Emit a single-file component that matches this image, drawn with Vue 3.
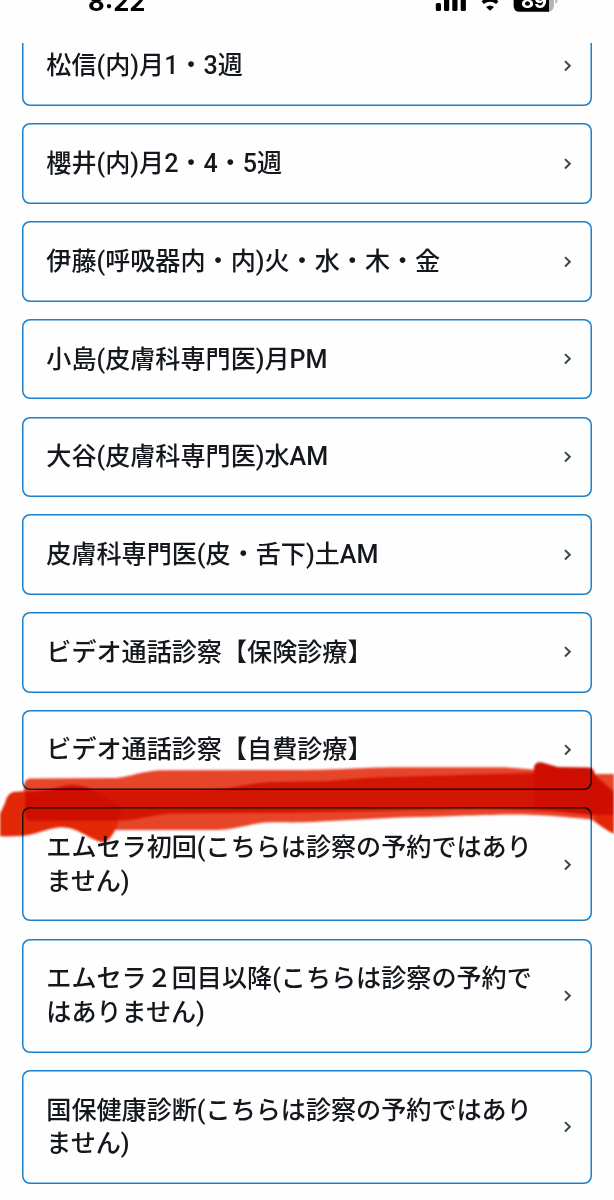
<template>
  <div class="screen">
    <!-- Status bar -->
    <header class="status-bar">
      <span class="clock">8:22</span>
      <svg class="status-icons" width="130" height="24" viewBox="430 -11 130 24">
        <rect x="435.8" y="3" width="5.2" height="8" rx="1.6" />
        <rect x="444" y="-1" width="5.2" height="12" rx="1.6" />
        <rect x="452.3" y="-4" width="5.2" height="15" rx="1.6" />
        <rect x="460.7" y="-8" width="5.2" height="19" rx="1.6" />
        <path d="M490 10.8 L486 6.9 Q490 3.9 494 6.9 Z" />
        <path class="arc" d="M482.7 2.6 Q490 -2.9 497.3 2.6" />
        <path class="arc" d="M478 -2.3 Q490 -11 502 -2.3" />
        <path d="M519 -8 H549.3 V11.8 H519.5 Q513.6 11.8 513.6 5.5 V-3 Q513.6 -8 519 -8 Z" />
        <path class="battery-rest" d="M549.3 -8 Q554 -7 554 -2 V5 Q554 10.5 549.3 11.7 Z" />
        <path class="battery-rest" d="M555.4 -2 Q557.4 -1 557.4 1 Q557.2 3.2 555.4 4 Z" />
        <text x="534" y="8.3" text-anchor="middle">89</text>
      </svg>
    </header>

    <!-- Menu list -->
    <main class="menu">
      <ul class="menu-list">
        <li v-for="item in items" :key="item" class="menu-item">
          <span class="label">{{ item }}</span>
          <svg class="chevron" width="8" height="12" viewBox="0 0 8 12">
            <path d="M1 1.1 L5.8 5.8 L1 10.5" />
          </svg>
        </li>
      </ul>
    </main>

    <!-- Red marker -->
    <svg class="marker" width="614" height="100" viewBox="0 755 614 100">
      <path
        class="light"
        d="M24 785 Q25 778 31 778.5 L115 778 C132 777 140 770.5 165 770.3 L300 770 C340 770 355 767.5 400 767.3 L505 767.3 L533 769.5 L596 774 L620 774 L620 836 C606 831 599 824 591 819.5 C565 817 545 814.5 510 814.5 C475 815 450 816.5 400 817.5 L320 821.5 C300 823 285 822 265 822.5 C245 825 235 830 215 830 L110 830 L24 825 Z"
      />
      <path
        class="mid"
        d="M26 791 L13 792 Q7 794 5 803 L-3 820 L-3 836 L5 836.5 L22 836 C36 835 47 828 62 827 C78 828 86 837 98 841 Q105 844 108 840 Q114 835 118 823 L123 808 L90 790 Z"
      />
      <path
        class="dark"
        d="M25 792 L50 789.5 C62 786 70 784 76 785 Q85 786 94 789.5 L205 789.5 C240 789 250 782 276 782 L330 781 C370 777 390 777 410 776.5 L490 774 L533 773 L596 776 L616 793 L616 815 L592 815 C570 812 540 810 500 809.5 C460 809 430 810 400 810.5 L300 812.5 L170 813.5 C150 815 140 820 120 820.5 L30 821 Q25 820 25 814 Z"
      />
      <path
        class="deep"
        d="M26 793 L60 789 Q78 784 92 790 L122 808 L117 820 L30 820 Q25 819 25 812 Z"
      />
      <path
        class="deep"
        d="M534 767 Q535 762 541 762.3 L558 767 L590 767.5 Q595 769 595.5 778 L614 795 L614 815 L592 815 L534 809 Z"
      />
      <path class="mid" d="M595 815 L620 815 L620 836 Q603 830 595 820 Z" />
    </svg>
  </div>
</template>

<script setup>
  const items = [
    '松信(内)月1・3週',
    '櫻井(内)月2・4・5週',
    '伊藤(呼吸器内・内)火・水・木・金',
    '小島(皮膚科専門医)月PM',
    '大谷(皮膚科専門医)水AM',
    '皮膚科専門医(皮・舌下)土AM',
    'ビデオ通話診察【保険診療】',
    'ビデオ通話診察【自費診療】',
    'エムセラ初回(こちらは診察の予約ではありません)',
    'エムセラ２回目以降(こちらは診察の予約ではありません)',
    '国保健康診断(こちらは診察の予約ではありません)'
  ]
</script>

<style>
  body {
    background: #fefefe;
  }
</style>

<style scoped>
  .screen {
    position: relative;
    width: 614px;
    height: 1200px;
    overflow: hidden;
    background: #fefefe;
    font-family: Roboto, "Noto Sans CJK JP", sans-serif;
    color: #14181c;
  }

  /* Status bar */
  .status-bar {
    display: flex;
    justify-content: space-between;
    align-items: flex-start;
    height: 43px;
    padding: 0 54px 0 88px;
    box-sizing: border-box;
    overflow: hidden;
    color: #000;
  }

  .clock {
    margin-top: -12px;
    font-family: Inter, sans-serif;
    font-size: 25.6px;
    font-weight: 700;
    line-height: 28px;
  }

  .status-icons {
    margin-top: -11px;
  }

    .status-icons .arc {
      fill: none;
      stroke: #000;
      stroke-width: 3.6;
    }

    .status-icons .battery-rest {
      fill: #b5b5b5;
    }

    .status-icons text {
      fill: #fff;
      font-family: Inter, sans-serif;
      font-size: 20px;
      font-weight: 700;
    }

  /* Menu list */
  .menu {
    height: 1157px;
    overflow: hidden;
  }

  .menu-list {
    display: flex;
    flex-direction: column;
    gap: 17.25px;
    margin: -17.4px 22.3px 0;
    padding: 0;
    list-style: none;
  }

  .menu-item {
    display: flex;
    align-items: center;
    justify-content: space-between;
    box-sizing: border-box;
    padding: 23.7px 20px 23.3px 24px;
    border-radius: 8px;
    box-shadow: inset 0 0 0 1.5px #1c80ca;
  }

  .label {
    width: 488px;
    font-size: 25.1px;
    font-weight: 500;
    line-height: 33.5px;
  }

  .chevron {
    flex: none;
  }

    .chevron path {
      fill: none;
      stroke: #37474f;
      stroke-width: 2;
    }

  /* Marker */
  .marker {
    position: absolute;
    left: 0;
    top: 755px;
    mix-blend-mode: multiply;
    filter: blur(1px);
  }

  .light {
    fill: #e8452a;
  }

  .mid {
    fill: #e42807;
  }

  .dark {
    fill: #d41504;
  }

  .deep {
    fill: #cf0e01;
  }
</style>
